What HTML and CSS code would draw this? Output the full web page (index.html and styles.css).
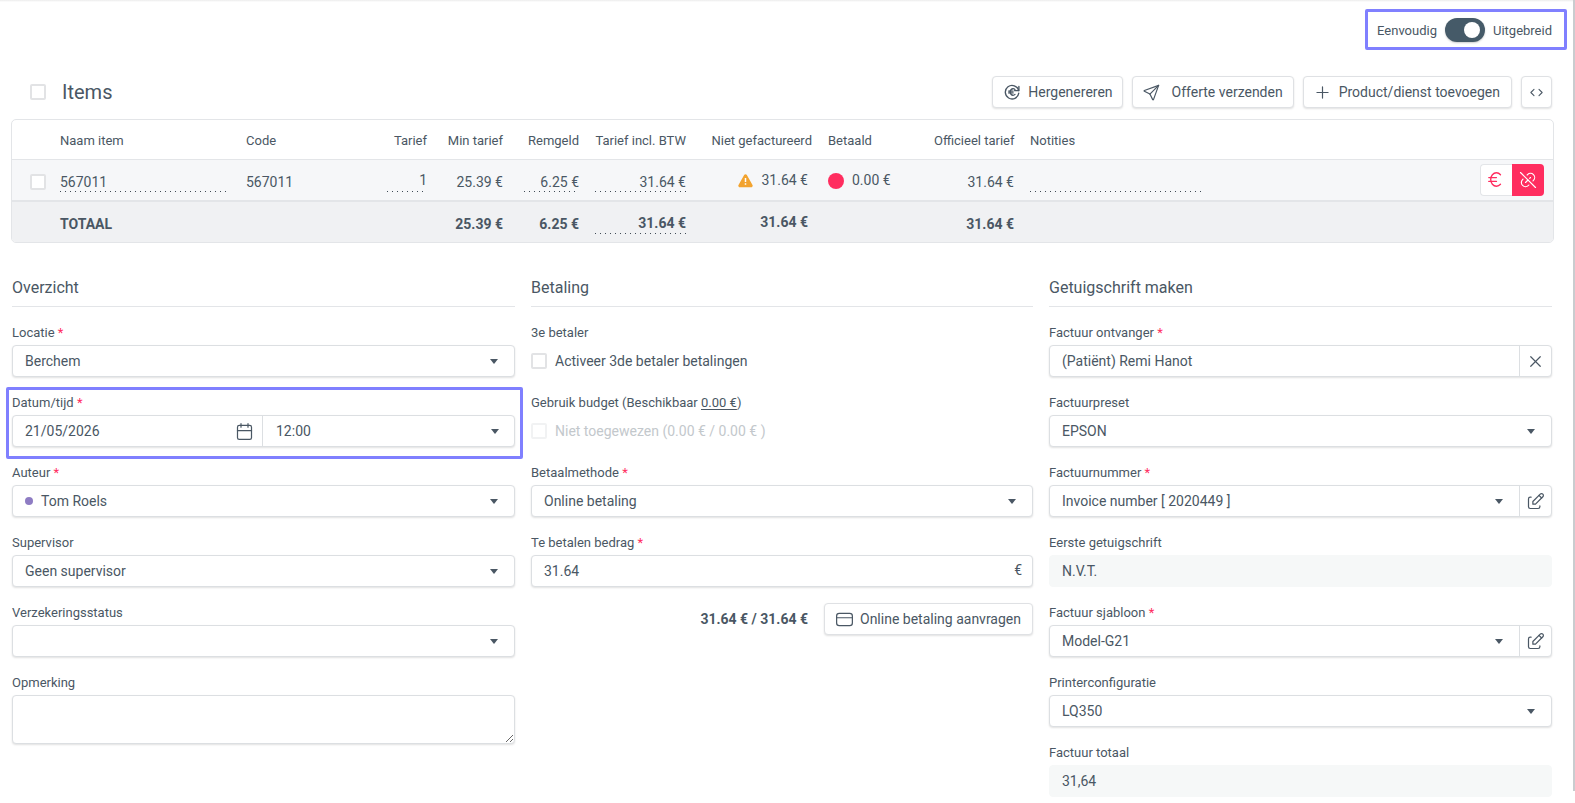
FILE: index.html
```html
<!DOCTYPE html>
<html lang="nl">
<head>
<meta charset="utf-8">
<title>Items</title>
<link rel="stylesheet" href="styles.css">
</head>
<body>
<div class="scroll-thumb"></div>
<main class="page">
  <div class="mode-row">
    <div class="mode-toggle highlight">
      <span>Eenvoudig</span>
      <span class="switch"><span class="knob"></span></span>
      <span>Uitgebreid</span>
    </div>
  </div>

  <div class="items-head">
    <span class="check"></span>
    <h1 class="items-title">Items</h1>
    <div class="items-actions">
      <button class="btn btn-regen"><svg class="ico ico-18" viewBox="0 0 24 24"><path d="M20.800 10a9 9 0 1 0 .2 3.500"/><path d="M21.200 4.500v5.700h-5.700"/><path d="M16 8.800a3.800 4.400 0 1 0 0 6.400"/><path d="M13.500 10.800h-6m0 2.400h6"/></svg>Hergenereren</button>
      <button class="btn btn-wide"><svg class="ico ico-19" viewBox="0 0 24 24"><path d="M10 14l11 -11"/><path d="M21 3l-6.500 18a.55 .55 0 0 1 -1 0l-3.500 -7l-7 -3.500a.55 .55 0 0 1 0 -1l18 -6.500"/></svg>Offerte verzenden</button>
      <button class="btn"><svg class="ico ico-19" viewBox="0 0 24 24"><path d="M12 5v14"/><path d="M5 12h14"/></svg>Product/dienst toevoegen</button>
      <button class="btn btn-icon"><svg class="ico ico-code" viewBox="0 0 24 24"><path d="M8 7l-5 5l5 5"/><path d="M16 7l5 5l-5 5"/></svg></button>
    </div>
  </div>

  <section class="card">
    <table class="items-table">
      <colgroup>
        <col class="c-check"><col class="c-name"><col class="c-code"><col class="c-rate"><col class="c-min"><col class="c-rem"><col class="c-btw"><col class="c-niet"><col class="c-bet"><col class="c-off"><col class="c-note"><col class="c-act">
      </colgroup>
      <thead>
        <tr>
          <th></th>
          <th>Naam item</th>
          <th>Code</th>
          <th class="r">Tarief</th>
          <th class="r">Min tarief</th>
          <th class="r">Remgeld</th>
          <th class="r">Tarief incl. BTW</th>
          <th class="r">Niet gefactureerd</th>
          <th>Betaald</th>
          <th class="r">Officieel tarief</th>
          <th>Notities</th>
          <th></th>
        </tr>
      </thead>
      <tbody>
        <tr class="row-item">
          <td class="cell-check"><span class="check"></span></td>
          <td><span class="dotted">567011</span></td>
          <td>567011</td>
          <td class="r"><span class="dotted dotted-high">1</span></td>
          <td class="r">25.39 €</td>
          <td class="r"><span class="dotted dotted-inset">6.25 €</span></td>
          <td class="r"><span class="dotted">31.64 €</span></td>
          <td class="r"><span class="status status-end">
            <svg class="warn" viewBox="0 0 24 24"><path d="M12 1.800c.9 0 1.700.5 2.200 1.300l9 16c.9 1.700-.3 3.700-2.200 3.700h-18c-1.900 0-3.100-2-2.200-3.700l9-16c.5-.8 1.300-1.300 2.200-1.300z"/><path class="warn-mark" d="M10.800 8h2.400v6.500h-2.400zM10.800 16.500h2.400v2.400h-2.400z"/></svg>31.64 €</span></td>
          <td><span class="status"><span class="dot-red"></span>0.00 €</span></td>
          <td class="r">31.64 €</td>
          <td><span class="dotted">&nbsp;</span></td>
          <td class="r">
            <span class="row-actions">
              <button class="act act-light"><svg class="ico ico-euro" viewBox="0 0 24 24"><path d="M17.200 7a6 7 0 1 0 0 10"/><path d="M13 10h-8m0 4h8"/></svg></button>
              <button class="act act-red"><svg class="ico ico-act" viewBox="0 0 24 24"><path d="M9 15l3 -3m2 -2l1 -1"/><path d="M11 6l.463 -.536a5 5 0 0 1 7.071 7.072l-.534 .463"/><path d="M3 3l18 18"/><path d="M13 18l-.397 .534a5.068 5.068 0 0 1 -7.127 0a4.972 4.972 0 0 1 0 -7.071l.524 -.463"/></svg></button>
            </span>
          </td>
        </tr>
        <tr class="row-total">
          <td></td>
          <td>TOTAAL</td>
          <td></td>
          <td></td>
          <td class="r">25.39 €</td>
          <td class="r">6.25 €</td>
          <td class="r"><span class="dotted">31.64 €</span></td>
          <td class="r"><span class="status status-end">31.64 €</span></td>
          <td></td>
          <td class="r">31.64 €</td>
          <td></td>
          <td></td>
        </tr>
      </tbody>
    </table>
  </section>

  <div class="columns">
    <section class="col">
      <h2 class="col-title">Overzicht</h2>
      <div class="group">
        <label class="lbl">Locatie <em>*</em></label>
        <div class="field"><span class="val">Berchem</span><span class="caret"></span></div>
      </div>
      <div class="group highlight">
        <label class="lbl">Datum/tijd <em>*</em></label>
        <div class="field field-split">
          <div class="seg seg-date"><span class="val">21/05/2026</span>
            <svg class="ico ico-cal" viewBox="0 0 24 24"><path d="M4 7a2 2 0 0 1 2 -2h12a2 2 0 0 1 2 2v12a2 2 0 0 1 -2 2h-12a2 2 0 0 1 -2 -2v-12z"/><path d="M16 3v4"/><path d="M8 3v4"/><path d="M4 11h16"/></svg>
          </div>
          <div class="seg seg-time"><span class="val">12:00</span><span class="caret"></span></div>
        </div>
      </div>
      <div class="group">
        <label class="lbl">Auteur <em>*</em></label>
        <div class="field"><span class="author-dot"></span><span class="val">Tom Roels</span><span class="caret"></span></div>
      </div>
      <div class="group">
        <label class="lbl">Supervisor</label>
        <div class="field"><span class="val">Geen supervisor</span><span class="caret"></span></div>
      </div>
      <div class="group">
        <label class="lbl">Verzekeringsstatus</label>
        <div class="field"><span class="caret"></span></div>
      </div>
      <div class="group">
        <label class="lbl">Opmerking</label>
        <textarea class="area"></textarea>
      </div>
    </section>

    <section class="col">
      <h2 class="col-title">Betaling</h2>
      <div class="group">
        <label class="lbl">3e betaler</label>
        <div class="check-row"><span class="check"></span><span>Activeer 3de betaler betalingen</span></div>
      </div>
      <div class="group">
        <label class="lbl">Gebruik budget (Beschikbaar <u>0.00 €</u>)</label>
        <div class="check-row check-row-off"><span class="check"></span><span>Niet toegewezen (0.00 € / 0.00 € )</span></div>
      </div>
      <div class="group">
        <label class="lbl">Betaalmethode <em>*</em></label>
        <div class="field"><span class="val">Online betaling</span><span class="caret"></span></div>
      </div>
      <div class="group">
        <label class="lbl">Te betalen bedrag <em>*</em></label>
        <div class="field"><span class="val">31.64</span><span class="suffix">€</span></div>
      </div>
      <div class="pay-row">
        <strong class="pay-sum">31.64 € / 31.64 €</strong>
        <button class="btn"><svg class="ico ico-21" viewBox="0 0 24 24"><path d="M3 8a3 3 0 0 1 3 -3h12a3 3 0 0 1 3 3v8a3 3 0 0 1 -3 3h-12a3 3 0 0 1 -3 -3z"/><path d="M3 10h18"/></svg>Online betaling aanvragen</button>
      </div>
    </section>

    <section class="col">
      <h2 class="col-title">Getuigschrift maken</h2>
      <div class="group">
        <label class="lbl">Factuur ontvanger <em>*</em></label>
        <div class="field field-addon"><div class="seg seg-main"><span class="val">(Patiënt) Remi Hanot</span></div>
          <div class="addon"><svg class="ico ico-x" viewBox="0 0 24 24"><path d="M18 6l-12 12"/><path d="M6 6l12 12"/></svg></div></div>
      </div>
      <div class="group">
        <label class="lbl">Factuurpreset</label>
        <div class="field"><span class="val">EPSON</span><span class="caret"></span></div>
      </div>
      <div class="group">
        <label class="lbl">Factuurnummer <em>*</em></label>
        <div class="field field-addon"><div class="seg seg-main"><span class="val">Invoice number [ 2020449 ]</span><span class="caret"></span></div>
          <div class="addon"><svg class="ico ico-edit" viewBox="0 0 24 24"><path d="M7 7h-1a2 2 0 0 0 -2 2v9a2 2 0 0 0 2 2h9a2 2 0 0 0 2 -2v-1"/><path d="M20.385 6.585a2.100 2.100 0 0 0 -2.970 -2.970l-8.415 8.385v3h3l8.385 -8.415z"/><path d="M16 5l3 3"/></svg></div></div>
      </div>
      <div class="group">
        <label class="lbl">Eerste getuigschrift</label>
        <div class="field field-ro"><span class="val">N.V.T.</span></div>
      </div>
      <div class="group">
        <label class="lbl">Factuur sjabloon <em>*</em></label>
        <div class="field field-addon"><div class="seg seg-main"><span class="val">Model-G21</span><span class="caret"></span></div>
          <div class="addon"><svg class="ico ico-edit" viewBox="0 0 24 24"><path d="M7 7h-1a2 2 0 0 0 -2 2v9a2 2 0 0 0 2 2h9a2 2 0 0 0 2 -2v-1"/><path d="M20.385 6.585a2.100 2.100 0 0 0 -2.970 -2.970l-8.415 8.385v3h3l8.385 -8.415z"/><path d="M16 5l3 3"/></svg></div></div>
      </div>
      <div class="group">
        <label class="lbl">Printerconfiguratie</label>
        <div class="field"><span class="val">LQ350</span><span class="caret"></span></div>
      </div>
      <div class="group">
        <label class="lbl">Factuur totaal</label>
        <div class="field field-ro"><span class="val">31,64</span></div>
      </div>
    </section>
  </div>
</main>
</body>
</html>
```

FILE: styles.css
```css
* { box-sizing: border-box; }

html, body {
  margin: 0;
  height: 803px;
  overflow: hidden;
  background: #fff;
}

body {
  font-family: Roboto, "Liberation Sans", sans-serif;
  font-size: 14px;
  color: #4a5764;
}

.page {
  height: 803px;
  padding: 0 22px 0 12px;
  background: linear-gradient(#ececec, #fff 2px);
}

.scroll-thumb {
  position: fixed;
  top: 0;
  right: 0;
  width: 2px;
  height: 791px;
  background: #c9cccf;
}

/* top mode switch */
.mode-row {
  display: flex;
  justify-content: flex-end;
  padding: 18px 1px 0 0;
}

.mode-toggle {
  display: flex;
  align-items: center;
  gap: 8px;
  height: 24px;
  font-size: 13px;
}

.highlight { position: relative; }

.highlight::after {
  content: "";
  position: absolute;
  border: 3px solid #8080ff;
  border-radius: 2px;
  pointer-events: none;
}

.mode-toggle::after {
  top: -9px;
  right: -15px;
  bottom: -8px;
  left: -12px;
}

.switch {
  display: flex;
  justify-content: flex-end;
  align-items: center;
  width: 40px;
  height: 24px;
  padding-right: 5px;
  border-radius: 12px;
  background: #455a68;
  box-shadow: 0 1px 2px rgba(0, 0, 0, .2);
}

.knob {
  width: 16px;
  height: 16px;
  border-radius: 50%;
  background: #fff;
}

/* items header */
.items-head {
  display: flex;
  align-items: center;
  margin-top: 34px;
  padding: 0 1px 0 18px;
}

.items-title {
  margin: 0 0 0 16px;
  font-size: 20px;
  font-weight: 400;
  line-height: 32px;
}

.items-actions {
  display: flex;
  gap: 9px;
  margin-left: auto;
}

.check {
  display: block;
  flex: none;
  width: 16px;
  height: 16px;
  border: 2px solid #e2e3e5;
  border-radius: 2px;
  background: #fff;
}

.btn {
  display: inline-flex;
  align-items: center;
  gap: 8px;
  height: 32px;
  padding: 0 11px;
  border: 1px solid #dfe1e4;
  border-radius: 4px;
  background: #fff;
  box-shadow: 0 1px 2px rgba(0, 0, 0, .12);
  font: inherit;
  color: inherit;
  white-space: nowrap;
}

.btn-regen { padding-right: 9px; }
.btn-wide { gap: 12px; padding-right: 10px; }

.btn-icon {
  justify-content: center;
  width: 31px;
  padding: 0;
}

.ico {
  flex: none;
  width: 16px;
  height: 16px;
  fill: none;
  stroke: currentColor;
  stroke-width: 1.7;
  stroke-linecap: round;
  stroke-linejoin: round;
}

.ico-18 { width: 18px; height: 18px; margin: 0 -1px; stroke-width: 1.8; }
.ico-19 { width: 19px; height: 19px; margin: 0 -1.500px; stroke-width: 1.5; }
.ico-21 { width: 21px; height: 21px; margin: 0 -2.500px; stroke-width: 1.4; }
.ico-code { width: 15px; height: 15px; }

/* table card */
.card {
  margin: 11px -1px 0;
  border: 1px solid #e3e5e8;
  border-radius: 5px;
  overflow: hidden;
}

.items-table {
  width: 1541px;
  table-layout: fixed;
  border-collapse: separate;
  border-spacing: 0;
}

.c-check { width: 40px; }
.c-name { width: 186px; }
.c-code { width: 141px; }
.c-rate { width: 56px; }
.c-min { width: 76px; }
.c-rem { width: 76px; }
.c-btw { width: 107px; }
.c-niet { width: 126px; }
.c-bet { width: 106px; }
.c-off { width: 96px; }
.c-note { width: 187px; }
.c-act { width: 344px; }

.items-table th,
.items-table td {
  padding: 0 8px;
  text-align: left;
  white-space: nowrap;
}

.items-table th {
  height: 40px;
  padding-top: 2px;
  border-bottom: 1px solid #e3e5e8;
  font-size: 13px;
  font-weight: 400;
}

.items-table .r { text-align: right; }

.row-item td {
  height: 42px;
  padding-top: 3px;
  border-bottom: 2px solid #e3e5e8;
  background: #f6f7f9;
}

.row-total td {
  height: 40px;
  padding-top: 3px;
  background: #f0f1f3;
  font-weight: 700;
}

.items-table .cell-check { padding-left: 18px; }

.dotted {
  display: block;
  height: 21px;
  line-height: 20px;
  background: linear-gradient(90deg, #3f4a55 1px, transparent 1px) left bottom / 5px 1px repeat-x;
}

.row-item .dotted { line-height: 22px; }
.row-item .dotted-high { line-height: 19px; }
.dotted-inset { margin-left: 5px; }

.status {
  display: inline-flex;
  align-items: center;
  gap: 8px;
  position: relative;
}

.row-total .status { bottom: 2px; }

.status-end { margin-right: 4px; }

.warn { width: 15px; height: 15px; fill: #f2a32f; flex: none; }
.warn-mark { fill: #fff; }

.dot-red {
  width: 16px;
  height: 16px;
  border-radius: 50%;
  background: #ff2d5f;
  position: relative;
  top: 1px;
}

.row-actions {
  display: inline-flex;
  vertical-align: middle;
  position: relative;
  bottom: 2px;
  margin-right: 1px;
}

.act {
  display: flex;
  align-items: center;
  justify-content: center;
  width: 32px;
  height: 32px;
  padding: 0;
  border: 0;
}

.act-light {
  border: 1px solid #e3e5e8;
  border-right: 0;
  border-radius: 4px 0 0 4px;
  background: #fff;
  color: #ff2d5f;
}

.act-red {
  border-radius: 0 4px 4px 0;
  background: #ff2d5f;
  color: #fff;
}

.ico-act { width: 20px; height: 20px; stroke-width: 1.4; }
.ico-euro { width: 23px; height: 23px; margin-right: 2px; stroke-width: 1.4; }

/* form columns */
.columns {
  display: grid;
  grid-template-columns: 503px 502px 503px;
  column-gap: 16px;
  align-items: start;
  margin-top: 35px;
}

.col-title {
  margin: 0 0 16px;
  padding-bottom: 8px;
  border-bottom: 1px solid #e3e5e8;
  font-size: 16px;
  font-weight: 400;
  line-height: 20px;
}

.group { margin-bottom: 16px; }

.group.highlight::after {
  top: -6px;
  right: -8px;
  bottom: -12px;
  left: -6px;
}

.lbl {
  display: block;
  margin-bottom: 2px;
  font-size: 13px;
  line-height: 20px;
}

.lbl em {
  font-style: normal;
  color: #ff2d5f;
}

.lbl u { text-underline-offset: 2px; }

.field {
  display: flex;
  align-items: center;
  height: 32px;
  padding: 0 16px 0 12px;
  border: 1px solid #dcdfe2;
  border-radius: 4px;
  background: #fff;
  box-shadow: 0 1px 2px rgba(0, 0, 0, .12);
}

.val { white-space: nowrap; }

.caret {
  flex: none;
  width: 0;
  height: 0;
  margin-left: auto;
  border-top: 5px solid #4a5764;
  border-right: 4px solid transparent;
  border-left: 4px solid transparent;
}

.field-split,
.field-addon { padding: 0; }

.seg {
  display: flex;
  align-items: center;
  height: 100%;
}

.seg-date {
  flex: 0 0 250px;
  padding: 0 7px 0 12px;
  border-right: 1px solid #dcdfe2;
}

.ico-cal {
  margin-left: auto;
  width: 21px;
  height: 21px;
  stroke-width: 1.4;
}

.seg-time {
  flex: 1;
  padding: 0 15px 0 13px;
}

.seg-main {
  flex: 1;
  padding: 0 16px 0 12px;
}

.addon {
  display: flex;
  align-items: center;
  justify-content: center;
  flex: 0 0 32px;
  height: 100%;
  border-left: 1px solid #dcdfe2;
}

.ico-x { width: 19px; height: 19px; stroke-width: 1.5; }
.ico-edit { width: 21px; height: 21px; stroke-width: 1.4; }

.field-ro {
  border-color: #f6f8f8;
  background: #f6f8f8;
  box-shadow: none;
}

.author-dot {
  flex: none;
  width: 8px;
  height: 8px;
  margin-right: 8px;
  border-radius: 50%;
  background: #8e7cc3;
}

.suffix {
  margin-left: auto;
  margin-right: -6px;
  position: relative;
  bottom: 1px;
}

.area {
  display: block;
  width: 100%;
  height: 49px;
  border: 1px solid #dcdfe2;
  border-radius: 4px;
  outline: 0;
  background: #fff;
  box-shadow: 0 1px 2px rgba(0, 0, 0, .12);
  font: inherit;
}

.check-row {
  display: flex;
  align-items: center;
  gap: 8px;
  height: 32px;
}

.check-row-off { color: #c3c8cc; }
.check-row-off .check { border-color: #f1f2f3; }

.pay-row {
  display: flex;
  align-items: center;
  justify-content: flex-end;
  gap: 16px;
}

.pay-sum { font-weight: 700; }
```
